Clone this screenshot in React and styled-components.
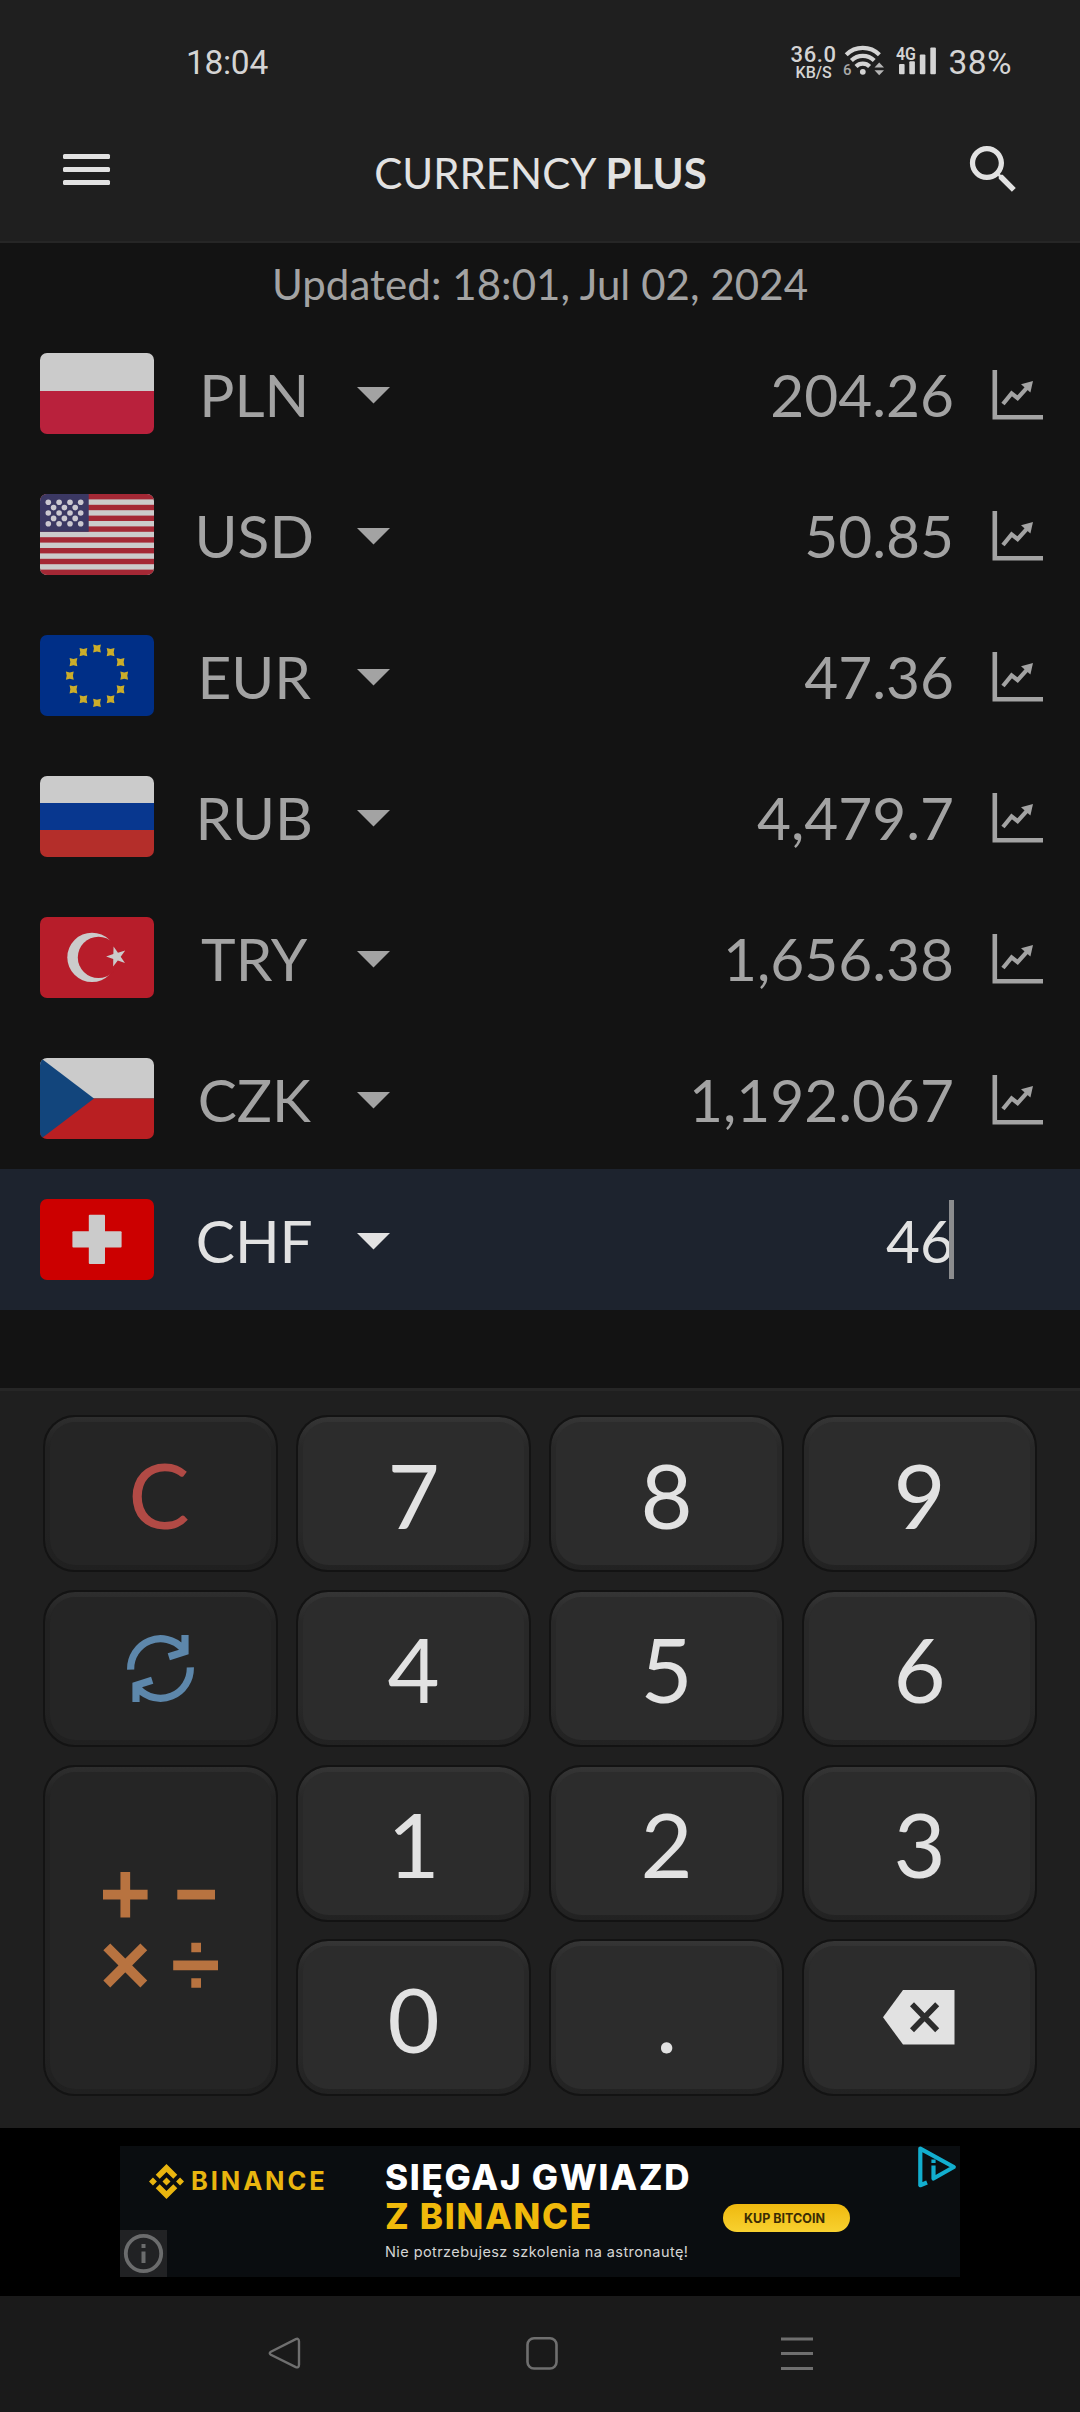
import React from "react";
import styled, { createGlobalStyle, css } from "styled-components";

const GlobalStyle = createGlobalStyle`
  * { box-sizing: border-box; }
  body { margin: 0; background: #131313; }
`;

const Screen = styled.main`
  width: 1080px;
  height: 2412px;
  display: flex;
  flex-direction: column;
  overflow: hidden;
  background: #131313;
  font-family: Lato, "Liberation Sans", sans-serif;
`;

/* ---------- status bar ---------- */

const StatusBar = styled.div`
  height: 100px;
  flex: none;
  display: flex;
  align-items: flex-start;
  justify-content: space-between;
  padding: 42px 68px 0 186px;
  background: #1f1f1f;
  color: #d4d4d4;
  font-family: Roboto, sans-serif;
`;

const StatusText = styled.span`
  margin-top: 0.5px;
  font-size: 33.5px;
  line-height: 40px;
  letter-spacing: ${(p) => p.$spacing || "0"};
`;

const StatusIcons = styled.div`
  display: flex;
  align-items: flex-start;
`;

const NetSpeed = styled.div`
  display: flex;
  flex-direction: column;
  align-items: center;
  width: 46px;
  margin: 3px 5px 0 0;
  font-weight: 500;
`;

const SpeedValue = styled.span`
  font-size: 22px;
  line-height: 20px;
  letter-spacing: 0.6px;
`;

const SpeedUnit = styled.span`
  font-size: 16px;
  line-height: 15px;
`;

const StatusSvg = styled.svg`
  display: block;
  margin-right: ${(p) => p.$gap}px;
`;

/* ---------- header ---------- */

const Header = styled.header`
  height: 143px;
  flex: none;
  display: flex;
  align-items: flex-start;
  justify-content: space-between;
  padding: 38px 55px 0 63px;
  background: #1f1f1f;
  border-bottom: 2px solid #262626;
  color: #e2e2e2;
`;

const MenuIcon = styled.div`
  width: 56px;
  padding-top: 16px;
  display: flex;
  flex-direction: column;
  gap: 8px;
`;

const MenuLine = styled.span`
  width: 47px;
  height: 5px;
  border-radius: 1.5px;
  background: #e2e2e2;
`;

const Title = styled.h1`
  margin: 10px 0 0;
  font-size: 42px;
  line-height: 50px;
  font-weight: 400;
`;

/* ---------- currency list ---------- */

const Updated = styled.p`
  height: 80px;
  flex: none;
  margin: 0;
  padding-top: 16px;
  text-align: center;
  font-size: 42px;
  line-height: 50px;
  letter-spacing: 0.06px;
  color: #a3a3a3;
`;

const CurrencyRow = styled.div`
  height: 141px;
  flex: none;
  display: flex;
  align-items: center;
  padding: 0 37px 0 40px;
  font-size: 58.6px;
  line-height: 72px;
  color: ${(p) => (p.$active ? "#e2e2e2" : "#a3a3a3")};
  background: ${(p) => (p.$active ? "#1d232e" : "transparent")};
`;

const FlagFrame = styled.div`
  width: 114px;
  height: 81px;
  border-radius: 7px;
  overflow: hidden;
`;

const FlagSvg = styled.svg`
  display: block;
  width: 114px;
  height: 81px;
`;

const Code = styled.span`
  width: 202px;
  padding: 1px 1.5px 0 0;
  text-align: center;
`;

const Caret = styled.span`
  width: 34px;
  height: 17px;
  margin: 3px 0 0 0.5px;
  background: currentColor;
  clip-path: polygon(0 0, 100% 0, 50% 100%);
`;

const Amount = styled.span`
  flex: 1;
  display: flex;
  align-items: center;
  justify-content: flex-end;
`;

const Digits = styled.span`
  padding-top: 1px;
`;

const TextCursor = styled.span`
  width: 5px;
  height: 79px;
  margin: 0 0 0 -5px;
  background: #8b8c8e;
`;

const ChartSlot = styled.span`
  width: 51px;
  height: 50px;
  margin: 3px 0 0 38px;
`;

const ListSpace = styled.div`
  height: 78px;
  flex: none;
`;

/* ---------- keypad ---------- */

const Keypad = styled.section`
  height: 740px;
  flex: none;
  display: grid;
  grid-template-columns: repeat(4, 235px);
  grid-template-rows: repeat(4, 157px);
  justify-content: center;
  gap: 17.8px 18px;
  padding-top: 24px;
  background: #1f1f1f;
  border-top: 3px solid #262626;
`;

const functionKey = css`
  --edge-top: #2e2e2e;
  --edge-side: #222222;
  --edge-bottom: #202020;
  --face: #252525;
`;

const digitKey = css`
  --edge-top: #353535;
  --edge-side: #282828;
  --edge-bottom: #222222;
  --face: #2c2c2c;
`;

const Key = styled.button`
  ${(p) => (p.$fn ? functionKey : digitKey)}
  grid-row: ${(p) => (p.$tall ? "span 2" : "auto")};
  display: flex;
  padding: 5px;
  border: 2px solid #131313;
  border-radius: 32px;
  background: linear-gradient(var(--edge-top) 0, var(--edge-side) 30px, var(--edge-side) calc(100% - 40px), var(--edge-bottom) 100%) padding-box;
  color: ${(p) => p.$color || "#e2e2e2"};
  font: 400 90px/108px Lato, "Liberation Sans", sans-serif;
`;

const KeyFace = styled.span`
  flex: 1;
  display: flex;
  align-items: center;
  justify-content: center;
  border-radius: 25px;
  background: var(--face);
`;

const ClearLabel = styled.span`
  font-size: 92px;
  padding-right: 3px;
`;

/* ---------- advert ---------- */

const AdStrip = styled.aside`
  height: 168px;
  flex: none;
  padding: 18px 120px 0;
  background: #000;
`;

const Banner = styled.div`
  position: relative;
  width: 840px;
  height: 131px;
  display: flex;
  background: #0a0d10;
  font-family: Inter, "Liberation Sans", sans-serif;
`;

const Brand = styled.div`
  width: 265px;
  padding: 18px 0 0 29px;
  display: flex;
  align-items: flex-start;
  gap: 7px;
  color: #e9b50f;
`;

const BrandName = styled.span`
  margin-top: 1px;
  font-size: 25.5px;
  line-height: 32px;
  font-weight: 700;
  letter-spacing: 2.9px;
`;

const Pitch = styled.div`
  width: 338px;
  display: flex;
  flex-direction: column;
  padding-top: 12px;
  white-space: nowrap;
`;

const Headline = styled.span`
  font-size: 35px;
  line-height: 39px;
  font-weight: 800;
  color: ${(p) => p.$color};
  letter-spacing: 1.7px;
`;

const Tagline = styled.span`
  margin-top: 7px;
  font-size: 14.5px;
  line-height: 18px;
  letter-spacing: 0.42px;
  color: #d5d5d5;
`;

const BuyButton = styled.span`
  width: 127px;
  height: 28px;
  margin-top: 58px;
  border-radius: 14px;
  display: flex;
  align-items: center;
  justify-content: center;
  padding-right: 4px;
  background: linear-gradient(#efb90f, #f8d12f);
  color: #3a2c04;
  font-size: 12.5px;
  font-weight: 700;
  white-space: nowrap;
`;

const InfoBadge = styled.svg`
  position: absolute;
  left: 0;
  bottom: 0;
`;

const AdChoices = styled.svg`
  position: absolute;
  top: 0;
  right: 2px;
`;

/* ---------- system navigation ---------- */

const NavBar = styled.nav`
  height: 116px;
  flex: none;
  display: flex;
  justify-content: space-between;
  padding: 41px 266px 0 267px;
  background: #1a1a1a;
`;

/* ---------- drawings ---------- */

const WHITE = "#cbcbcb";

function starPoints(cx, cy, r, inner, turn) {
  return Array.from({ length: 10 }, (_, i) => {
    const a = turn + (i * Math.PI) / 5;
    const d = i % 2 ? inner : r;
    return `${(cx + d * Math.cos(a)).toFixed(2)},${(cy + d * Math.sin(a)).toFixed(2)}`;
  }).join(" ");
}

const flags = {
  PLN: (
    <>
      <rect width="114" height="38" fill={WHITE} />
      <rect y="38" width="114" height="43" fill="#b9213c" />
    </>
  ),
  USD: (
    <>
      <rect width="114" height="81" fill={WHITE} />
      {[0, 2, 4, 6, 8, 10, 12, 14].map((i) => (
        <rect key={i} y={i * 5.4} width="114" height="5.4" fill="#a42835" />
      ))}
      <rect width="48.7" height="37.8" fill="#3b3863" />
      {[0, 1, 2, 3, 4].map((row) =>
        (row % 2 ? [13.6, 24.4, 35.2] : [8.3, 19.1, 30, 40.7]).map((x) => (
          <circle key={`${row}-${x}`} cx={x} cy={8.2 + row * 5.4} r="2.8" fill="#cbc8d0" />
        ))
      )}
    </>
  ),
  EUR: (
    <>
      <rect width="114" height="81" fill="#002f87" />
      {Array.from({ length: 12 }, (_, i) => {
        const a = (i * Math.PI) / 6;
        return (
          <path
            key={i}
            transform={`translate(${57 + 27.2 * Math.sin(a)} ${40.7 - 27.2 * Math.cos(a)})`}
            d="M-3.9-4.1 0-3.1 3.9-4.1 3.1 0 3.9 4.1 0 3.1-3.9 4.1-3.1 0z"
            fill="#cbad2a"
          />
        );
      })}
    </>
  ),
  RUB: (
    <>
      <rect width="114" height="27" fill={WHITE} />
      <rect y="27" width="114" height="27" fill="#08378f" />
      <rect y="54" width="114" height="27" fill="#b42e2a" />
    </>
  ),
  TRY: (
    <>
      <rect width="114" height="81" fill="#b71d2a" />
      <circle cx="52" cy="40.4" r="24.7" fill={WHITE} />
      <circle cx="58.5" cy="40.4" r="20.7" fill="#b71d2a" />
      <polygon points={starPoints(76.6, 39.6, 10.5, 4.1, Math.PI + 0.02)} fill={WHITE} />
    </>
  ),
  CZK: (
    <>
      <rect width="114" height="40.5" fill={WHITE} />
      <rect y="40.5" width="114" height="40.5" fill="#b91f22" />
      <path d="M0-.5 54 40.5 0 81.5z" fill="#12457c" />
    </>
  ),
  CHF: (
    <>
      <rect width="114" height="81" fill="#cc0000" />
      <rect x="48.8" y="15.8" width="16.2" height="49.2" rx="1" fill={WHITE} />
      <rect x="32.4" y="32.2" width="49.2" height="16.4" rx="1" fill={WHITE} />
    </>
  ),
};

const Flag = ({ code }) => (
  <FlagFrame>
    <FlagSvg viewBox="0 0 114 81">{flags[code]}</FlagSvg>
  </FlagFrame>
);

const ChartSvg = styled.svg`
  display: block;
`;

const ChartIcon = () => (
  <ChartSvg width="51" height="50" viewBox="0 0 51 50" fill="none" stroke="#a3a3a3">
    <path d="M2.8 0V47.3H51" strokeWidth="4.6" />
    <path d="M11 34 19.6 23.4 25.6 28.2 36 16.6" strokeWidth="4.2" />
    <path d="M29 14.2 41 11 38.4 22.6z" fill="#a3a3a3" stroke="none" />
  </ChartSvg>
);

const SearchIcon = () => (
  <svg width="63" height="63" viewBox="0 0 24 24" fill="#e2e2e2">
    <path d="M15.5 14h-.79l-.28-.27C15.41 12.59 16 11.11 16 9.5 16 5.91 13.09 3 9.5 3S3 5.91 3 9.5 5.91 16 9.5 16c1.61 0 3.09-.59 4.23-1.57l.27.28v.79l5 4.99L20.49 19l-4.99-5zm-6 0C7.01 14 5 11.99 5 9.5S7.01 5 9.5 5 14 7.01 14 9.5 11.99 14 9.5 14z" />
  </svg>
);

const WifiIcon = () => (
  <StatusSvg width="43" height="36" viewBox="-1 0 43 36" $gap={11} fill="none" stroke="#d4d4d4">
    <path d="M3.2 12.8a23.5 23.5 0 0 1 33.2 0" strokeWidth="4.2" />
    <path d="M8.4 18.6a16.3 16.3 0 0 1 22.8 0" strokeWidth="4.2" />
    <path d="M13 24.4a9.6 9.6 0 0 1 13.6 0" strokeWidth="4.2" />
    <circle cx="19.8" cy="29.8" r="2.9" fill="#d4d4d4" stroke="none" />
    <text x="0" y="32.5" fontSize="15" fontWeight="500" fill="#a9a9a9" stroke="none">6</text>
    <path d="M31.5 25.5 36.2 20.5 41 25.5zM31.5 28.3 36.2 33.3 41 28.3z" fill="#b5b5b5" stroke="none" />
  </StatusSvg>
);

const SignalIcon = () => (
  <StatusSvg width="42" height="34" viewBox="0 0 42 34" $gap={11} fill="#d4d4d4">
    <text x="0" y="18" fontSize="19" fontWeight="600" textLength="20" lengthAdjust="spacingAndGlyphs">4G</text>
    <rect x="3" y="22" width="5.6" height="10.3" rx="1" />
    <rect x="13.3" y="19.3" width="5.6" height="13" rx="1" />
    <rect x="23.8" y="12.6" width="5.6" height="19.7" rx="1" />
    <rect x="34.3" y="5.6" width="5.6" height="26.7" rx="1" />
  </StatusSvg>
);

const SwapIcon = () => (
  <svg width="67" height="67" viewBox="0 0 67 67" fill="none" stroke="#5d87ab" strokeWidth="7.2">
    <path d="M3.7 34.7A29.9 29.9 0 0 1 55.6 13.4M58 0V16.6L41.8 21.8" />
    <path d="M63.3 32.3A29.9 29.9 0 0 1 11.4 53.6M9 67V50.4L25.2 45.2" />
  </svg>
);

const OperatorsIcon = () => (
  <svg width="115" height="116" viewBox="0 0 115 116" fill="none" stroke="#b87340" strokeWidth="9.7">
    <path d="M0 22.7H44.6M22.3 0V45.4M74.3 22.7H112" />
    <path d="M3.8 74.9 40.8 112M40.8 74.9 3.8 112" />
    <path d="M70.2 93.3H115M88.3 75.5H98M88.3 111H98" />
  </svg>
);

const BackspaceIcon = () => (
  <svg width="73" height="55" viewBox="0 0 73 55">
    <path d="M0 27.3 20 0H71.5V54.5H20z" fill="#e2e2e2" />
    <path d="M29 14.3 54.2 40.3M54.2 14.3 29 40.3" stroke="#2c2c2c" strokeWidth="5.6" />
  </svg>
);

const BrandMark = () => (
  <svg width="35" height="35" viewBox="0 0 126.6 126.6" fill="#e9b50f">
    <path d="M38.7 53.2 63.3 28.6 87.9 53.2 102.2 38.9 63.3 0 24.4 38.9zM0 63.3 14.3 49 28.6 63.3 14.3 77.6zM38.7 73.4 63.3 98 87.9 73.4 102.2 87.7 63.3 126.6 24.4 87.7zM98 63.3 112.3 49 126.6 63.3 112.3 77.6zM77.8 63.3 63.3 48.8 48.8 63.3 63.3 77.8z" />
  </svg>
);

const rows = [
  ["PLN", "204.26"],
  ["USD", "50.85"],
  ["EUR", "47.36"],
  ["RUB", "4,479.7"],
  ["TRY", "1,656.38"],
  ["CZK", "1,192.067"],
  ["CHF", "46", true],
];

const keys = [
  { id: "clear", label: <ClearLabel>C</ClearLabel>, fn: true, color: "#b14a45" },
  { id: "7" }, { id: "8" }, { id: "9" },
  { id: "swap", label: <SwapIcon />, fn: true },
  { id: "4" }, { id: "5" }, { id: "6" },
  { id: "operators", label: <OperatorsIcon />, fn: true, tall: true },
  { id: "1" }, { id: "2" }, { id: "3" },
  { id: "0" }, { id: "." },
  { id: "backspace", label: <BackspaceIcon /> },
];

export default function App() {
  return (
    <Screen>
      <GlobalStyle />
      <StatusBar>
        <StatusText $spacing="-0.3px">18:04</StatusText>
        <StatusIcons>
          <NetSpeed>
            <SpeedValue>36.0</SpeedValue>
            <SpeedUnit>KB/S</SpeedUnit>
          </NetSpeed>
          <WifiIcon />
          <SignalIcon />
          <StatusText $spacing="0.4px">38%</StatusText>
        </StatusIcons>
      </StatusBar>

      <Header>
        <MenuIcon>
          <MenuLine />
          <MenuLine />
          <MenuLine />
        </MenuIcon>
        <Title>CURRENCY <b>PLUS</b></Title>
        <SearchIcon />
      </Header>

      <Updated>Updated: 18:01, Jul 02, 2024</Updated>

      {rows.map(([code, amount, active]) => (
        <CurrencyRow key={code} $active={active}>
          <Flag code={code} />
          <Code>{code}</Code>
          <Caret />
          <Amount>
            <Digits>{amount}</Digits>
            {active && <TextCursor />}
          </Amount>
          <ChartSlot>{!active && <ChartIcon />}</ChartSlot>
        </CurrencyRow>
      ))}
      <ListSpace />

      <Keypad>
        {keys.map((k) => (
          <Key key={k.id} $fn={k.fn} $tall={k.tall} $color={k.color}>
            <KeyFace>{k.label || k.id}</KeyFace>
          </Key>
        ))}
      </Keypad>

      <AdStrip>
        <Banner>
          <Brand>
            <BrandMark />
            <BrandName>BINANCE</BrandName>
          </Brand>
          <Pitch>
            <Headline $color="#ffffff">SIĘGAJ GWIAZD</Headline>
            <Headline $color="#f0b90b">Z BINANCE</Headline>
            <Tagline>Nie potrzebujesz szkolenia na astronautę!</Tagline>
          </Pitch>
          <BuyButton>KUP BITCOIN</BuyButton>
          <InfoBadge width="47" height="47" viewBox="0 0 47 47">
            <rect width="47" height="47" fill="#212224" />
            <circle cx="23.5" cy="23.5" r="17.7" fill="none" stroke="#6b6c6d" strokeWidth="3.8" />
            <path d="M21.5 14h4v4h-4zM21.5 21.5h4V33h-4z" fill="#6b6c6d" />
          </InfoBadge>
          <AdChoices width="40" height="42" viewBox="0 0 40 42" fill="none" stroke="#12aecf" strokeWidth="4.2" strokeLinejoin="round">
            <path d="M9 36.5 2.3 39.2V2.6L35.8 21 15.5 32.5V19.5" />
            <path d="M15.5 13.5V17" />
          </AdChoices>
        </Banner>
      </AdStrip>

      <NavBar>
        <svg width="36" height="34" viewBox="0 0 36 34" fill="none" stroke="#6f6f6f" strokeWidth="2.4">
          <path d="M3.9 14.7 28.8 2.1Q31.8.9 32 4.5V27.7Q31.8 31.3 28.8 30.1L3.9 17.8Q1.6 16.2 3.9 14.7z" />
        </svg>
        <svg width="32" height="34" viewBox="0 0 32 34" fill="none" stroke="#6f6f6f" strokeWidth="2.6">
          <rect x="1.5" y="1.3" width="29" height="30.2" rx="6.5" />
        </svg>
        <svg width="34" height="34" viewBox="0 0 34 34" fill="none" stroke="#6f6f6f" strokeWidth="3">
          <path d="M1 2H33M1 16.5H33M1 31.5H33" />
        </svg>
      </NavBar>
    </Screen>
  );
}
